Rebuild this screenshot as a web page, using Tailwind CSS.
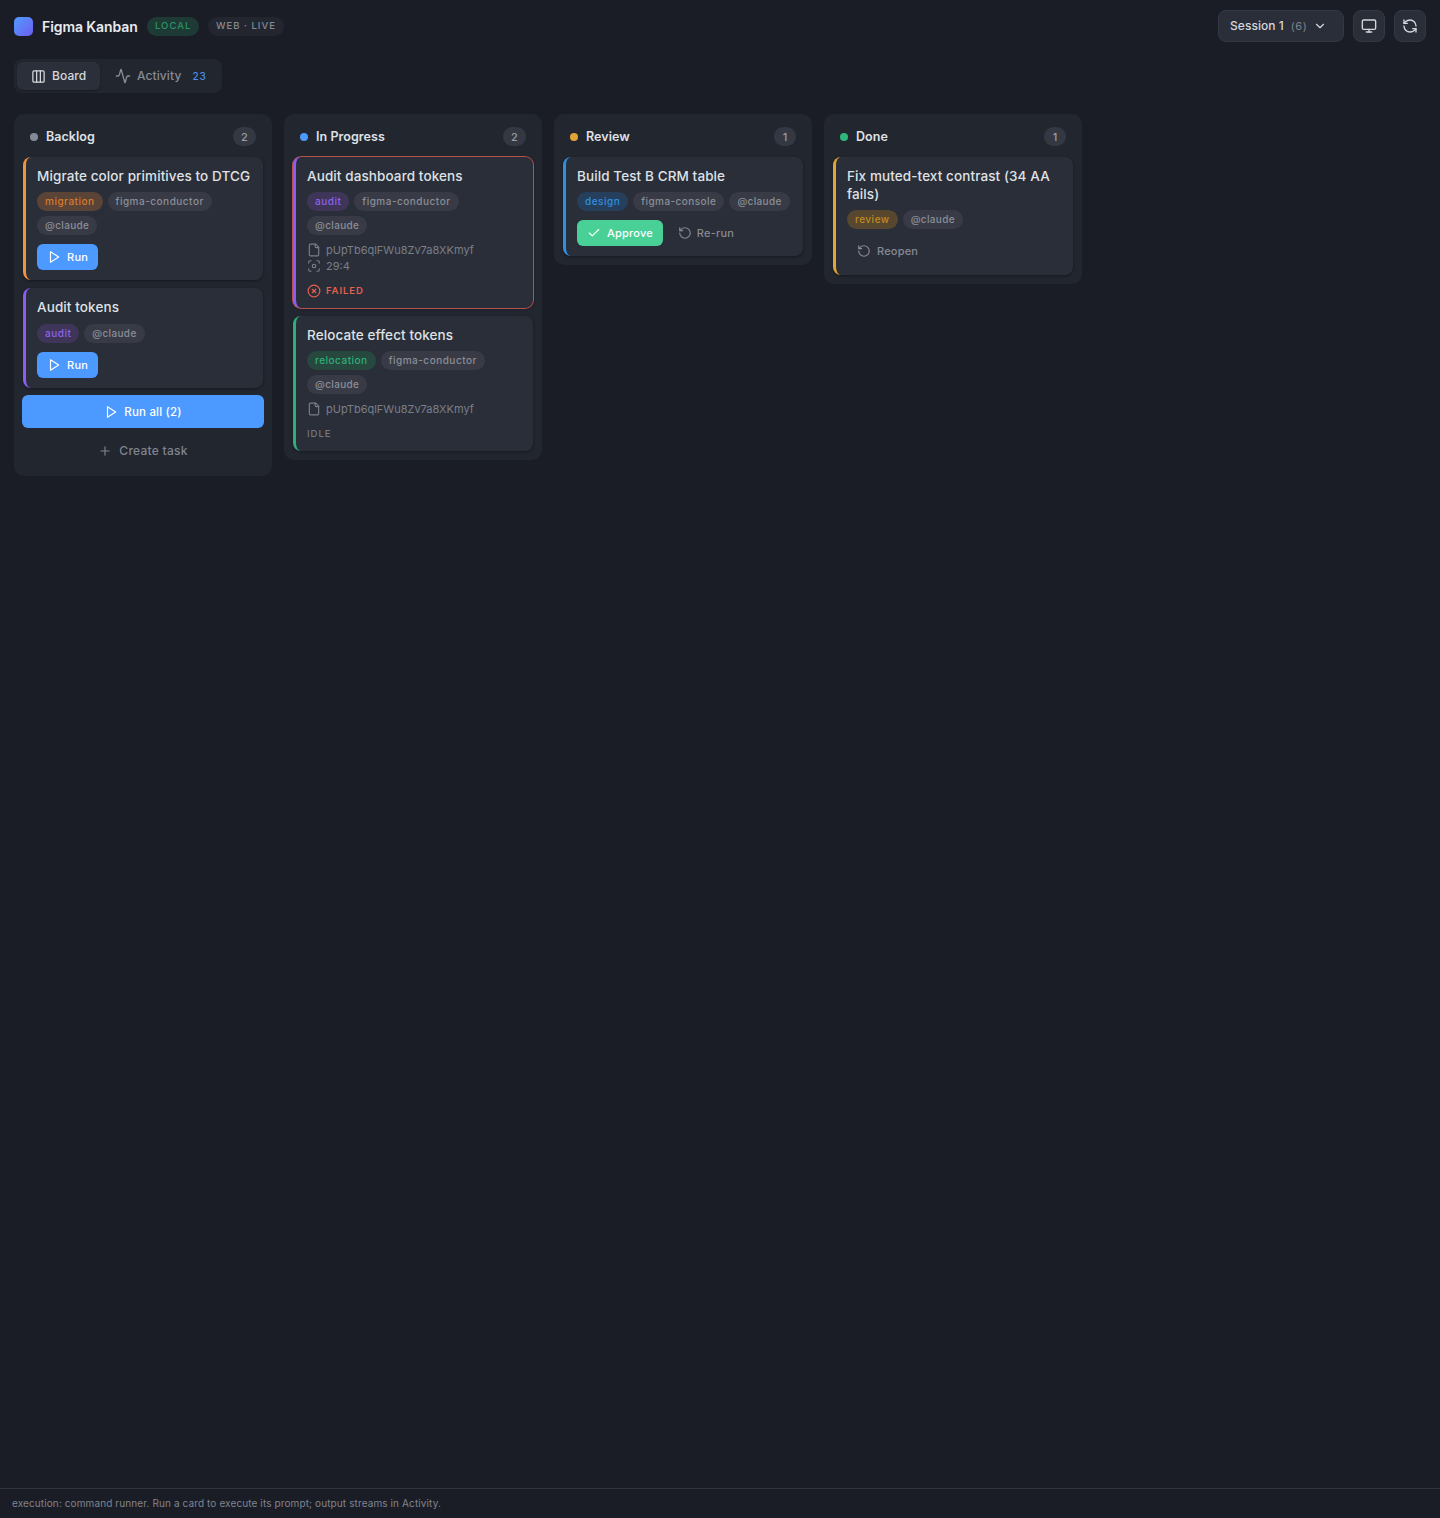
<!DOCTYPE html>
<html>
  <head>
    <meta charset="utf-8">
    <title>Figma Kanban</title>
    <script src="https://cdn.jsdelivr.net/npm/@tailwindcss/browser@4"></script>
  </head>
  <body class="bg-[#1a1d26] font-[Inter,sans-serif] text-[#e4e6ea]">
<div class="flex flex-col h-[1518px]">

  <!-- header -->
  <div class="flex items-center h-[52px] pl-3.5 pr-3.5 shrink-0">
    <div class="flex items-center h-[52px] pt-px">
      <div class="w-[19px] h-[19px] rounded-[5px] bg-linear-to-br from-[#4c9aff] to-[#6b5cf0]"></div>
      <div class="ml-[9px] w-[96px] text-[14px] leading-5 font-semibold whitespace-nowrap tracking-[-0.08px] text-[#e8eaee]">Figma Kanban</div>
      <div class="ml-[9px] h-[19px] w-[52px] pl-2 flex items-center rounded-full bg-[#1d3b34] text-[#2a9466] text-[9.5px] font-medium tracking-[1px]">LOCAL</div>
      <div class="ml-[9px] h-[19px] px-2 flex items-center rounded-full bg-[#23262f] text-[#868a94] text-[9.5px] font-medium tracking-[1px]">WEB · LIVE</div>
    </div>
    <div class="ml-auto h-8 w-[126px] pl-[11px] flex items-center rounded-lg bg-[#2a2e38] border border-[#343843] text-[12px] font-medium tracking-[0.05px] text-[#d5d7dc]">
      Session 1 <span class="ml-[7px] text-[11px] font-normal tracking-[0.5px] text-[#7d818b]">(6)</span>
      <svg class="ml-1.5 w-3.5 h-3.5" viewBox="0 0 24 24" fill="none" stroke="currentColor" stroke-width="2" stroke-linecap="round" stroke-linejoin="round"><path d="m6 9 6 6 6-6"/></svg>
    </div>
    <div class="ml-[9px] w-8 h-8 flex items-center justify-center rounded-lg bg-[#2a2e38] border border-[#343843] text-[#d5d7dc]">
      <svg class="w-4 h-4" viewBox="0 0 24 24" fill="none" stroke="currentColor" stroke-width="2" stroke-linecap="round" stroke-linejoin="round"><rect width="20" height="14" x="2" y="3" rx="2"/><path d="M8 21h8"/><path d="M12 17v4"/></svg>
    </div>
    <div class="ml-[9px] w-8 h-8 flex items-center justify-center rounded-lg bg-[#2a2e38] border border-[#343843] text-[#d5d7dc]">
      <svg class="w-4 h-4" viewBox="0 0 24 24" fill="none" stroke="currentColor" stroke-width="2" stroke-linecap="round" stroke-linejoin="round"><path d="M21 12a9 9 0 0 0-9-9 9.75 9.75 0 0 0-6.74 2.74L3 8"/><path d="M3 3v5h5"/><path d="M3 12a9 9 0 0 0 9 9 9.75 9.75 0 0 0 6.74-2.74L21 16"/><path d="M16 16h5v5"/></svg>
    </div>
  </div>

  <!-- tabs -->
  <div class="ml-3.5 mt-[7px] flex w-[208px] h-[34px] p-[3px] rounded-lg bg-[#22262f] shrink-0">
    <div class="w-[83px] flex items-center pl-3.5 gap-1.5 rounded-md bg-[#2b2f39] shadow-[0_1px_2px_rgba(0,0,0,0.3)] text-[12px] font-medium tracking-[0.1px] text-[#d5d7dc]">
      <svg class="w-[15px] h-[15px]" viewBox="0 0 24 24" fill="none" stroke="currentColor" stroke-width="2" stroke-linecap="round" stroke-linejoin="round"><rect width="18" height="18" x="3" y="3" rx="2"/><path d="M9 3v18"/><path d="M15 3v18"/></svg>
      Board
    </div>
    <div class="flex items-center pl-[15px] text-[12px] font-medium tracking-[0.1px] text-[#868a94]">
      <svg class="w-4 h-4 mr-1.5" viewBox="0 0 24 24" fill="none" stroke="currentColor" stroke-width="2" stroke-linecap="round" stroke-linejoin="round"><path d="M22 12h-2.48a2 2 0 0 0-1.93 1.46l-2.35 8.36a.25.25 0 0 1-.48 0L9.24 2.18a.25.25 0 0 0-.48 0l-2.35 8.36A2 2 0 0 1 4.49 12H2"/></svg>
      Activity
      <span class="ml-[11px] text-[10px] tracking-[1px] text-[#4a8fe8]">23</span>
    </div>
  </div>

  <!-- board -->
  <div class="flex items-start gap-3 pl-3.5 mt-[21px] grow">

    <!-- backlog -->
    <div class="w-[258px] rounded-[10px] bg-[#22262f] px-2 pb-[9px]">
      <div class="flex items-center h-[42.6px] pt-[3.4px] pl-2 pr-2">
        <div class="w-2 h-2 rounded-full bg-[#868a98]"></div>
        <div class="ml-2 text-[12.5px] font-semibold tracking-[0.05px] text-[#dfe1e5]">Backlog</div>
        <div class="ml-auto w-[23px] h-[19px] flex items-center justify-center rounded-full bg-[#343842] text-[11px] font-medium text-[#9a9da6]">2</div>
      </div>
      <div class="flex flex-col gap-2 mx-px">
        <div class="rounded-lg border-l-[3px] border-[#f0923e] bg-[#2a2e38] pl-[11px] pr-[11px] pt-2.5 pb-2.5 shadow-[0_1px_3px_rgba(0,0,0,0.35)]">
          <div class="text-[13.5px] leading-[18.2px] font-medium tracking-[0.1px] text-[#dfe1e5]">Migrate color primitives to DTCG</div>
          <div class="flex flex-wrap gap-[5px] mt-[7.4px]">
            <span class="h-[19px] px-2 flex items-center rounded-full bg-[#5a4337] text-[#d97a2b] text-[10px] font-medium tracking-[0.5px]">migration</span>
            <span class="h-[19px] px-2 flex items-center rounded-full bg-[#383b45] text-[#8a8e98] text-[10px] font-medium tracking-[0.5px]">figma-conductor</span>
            <span class="h-[19px] px-2 flex items-center rounded-full bg-[#383b45] text-[#8a8e98] text-[10px] font-medium tracking-[0.35px]">@claude</span>
          </div>
          <div class="mt-[9px] w-[61px] h-[26px] pl-2.5 flex items-center gap-1.5 rounded-md bg-[#4c9aff] text-white text-[11px] font-medium tracking-[0.3px]">
            <svg class="w-3.5 h-3.5" viewBox="0 0 24 24" fill="none" stroke="currentColor" stroke-width="2" stroke-linecap="round" stroke-linejoin="round"><polygon points="6 3 20 12 6 21 6 3"/></svg>
            Run
          </div>
        </div>
        <div class="rounded-lg border-l-[3px] border-[#8b5cf6] bg-[#2a2e38] pl-[11px] pr-[11px] pt-2.5 pb-2.5 shadow-[0_1px_3px_rgba(0,0,0,0.35)]">
          <div class="text-[13.5px] leading-[18.2px] font-medium tracking-[0.1px] text-[#dfe1e5]">Audit tokens</div>
          <div class="flex flex-wrap gap-[5px] mt-[7.4px]">
            <span class="h-[19px] px-2 flex items-center rounded-full bg-[#3f3558] text-[#8f62e8] text-[10px] font-medium tracking-[0.5px]">audit</span>
            <span class="h-[19px] px-2 flex items-center rounded-full bg-[#383b45] text-[#8a8e98] text-[10px] font-medium tracking-[0.35px]">@claude</span>
          </div>
          <div class="mt-[9px] w-[61px] h-[26px] pl-2.5 flex items-center gap-1.5 rounded-md bg-[#4c9aff] text-white text-[11px] font-medium tracking-[0.3px]">
            <svg class="w-3.5 h-3.5" viewBox="0 0 24 24" fill="none" stroke="currentColor" stroke-width="2" stroke-linecap="round" stroke-linejoin="round"><polygon points="6 3 20 12 6 21 6 3"/></svg>
            Run
          </div>
        </div>
      </div>
      <div class="mt-[7px] h-[33px] pt-0.5 flex items-center justify-center gap-1.5 rounded-md bg-[#4c9aff] text-white text-[11.5px] font-medium tracking-[0.2px]">
        <svg class="w-3.5 h-3.5" viewBox="0 0 24 24" fill="none" stroke="currentColor" stroke-width="2" stroke-linecap="round" stroke-linejoin="round"><polygon points="6 3 20 12 6 21 6 3"/></svg>
        Run all (2)
      </div>
      <div class="mt-1.5 h-[33px] pt-0.5 flex items-center justify-center gap-[7px] text-[12px] font-medium tracking-[0.25px] text-[#80848e]">
        <svg class="w-3.5 h-3.5" viewBox="0 0 24 24" fill="none" stroke="currentColor" stroke-width="2" stroke-linecap="round" stroke-linejoin="round"><path d="M5 12h14"/><path d="M12 5v14"/></svg>
        Create task
      </div>
    </div>

    <!-- in progress -->
    <div class="w-[258px] rounded-[10px] bg-[#22262f] px-2 pb-[9px]">
      <div class="flex items-center h-[42.6px] pt-[3.4px] pl-2 pr-2">
        <div class="w-2 h-2 rounded-full bg-[#4c9aff]"></div>
        <div class="ml-2 text-[12.5px] font-semibold tracking-[0.05px] text-[#dfe1e5]">In Progress</div>
        <div class="ml-auto w-[23px] h-[19px] flex items-center justify-center rounded-full bg-[#343842] text-[11px] font-medium text-[#9a9da6]">2</div>
      </div>
      <div class="flex flex-col gap-2 mx-px">
        <div class="rounded-lg border-l-[3px] border-[#8b5cf6] bg-[#2a2e38] pl-[11px] pr-[11px] pt-2.5 pb-2.5 ring-1 ring-[#b5504c] shadow-[0_1px_3px_rgba(0,0,0,0.35)]">
          <div class="text-[13.5px] leading-[18.2px] font-medium tracking-[0.1px] text-[#dfe1e5]">Audit dashboard tokens</div>
          <div class="flex flex-wrap gap-[5px] mt-[7.4px]">
            <span class="h-[19px] px-2 flex items-center rounded-full bg-[#3f3558] text-[#8f62e8] text-[10px] font-medium tracking-[0.5px]">audit</span>
            <span class="h-[19px] px-2 flex items-center rounded-full bg-[#383b45] text-[#8a8e98] text-[10px] font-medium tracking-[0.5px]">figma-conductor</span>
            <span class="h-[19px] px-2 flex items-center rounded-full bg-[#383b45] text-[#8a8e98] text-[10px] font-medium tracking-[0.35px]">@claude</span>
          </div>
          <div class="mt-[7px] flex items-center gap-[5px] h-4 text-[11px] text-[#7a7e88]">
            <svg class="w-3.5 h-3.5" viewBox="0 0 24 24" fill="none" stroke="currentColor" stroke-width="2" stroke-linecap="round" stroke-linejoin="round"><path d="M15 2H6a2 2 0 0 0-2 2v16a2 2 0 0 0 2 2h12a2 2 0 0 0 2-2V7Z"/><path d="M14 2v4a2 2 0 0 0 2 2h4"/></svg>
            pUpTb6qlFWu8Zv7a8XKmyf
          </div>
          <div class="flex items-center gap-[5px] h-4 text-[11px] text-[#7a7e88]">
            <svg class="w-3.5 h-3.5" viewBox="0 0 24 24" fill="none" stroke="currentColor" stroke-width="2" stroke-linecap="round" stroke-linejoin="round"><circle cx="12" cy="12" r="3"/><path d="M3 7V5a2 2 0 0 1 2-2h2"/><path d="M17 3h2a2 2 0 0 1 2 2v2"/><path d="M21 17v2a2 2 0 0 1-2 2h-2"/><path d="M7 21H5a2 2 0 0 1-2-2v-2"/></svg>
            29:4
          </div>
          <div class="mt-[9.6px] flex items-center gap-[5px] h-3.5 text-[9.5px] font-semibold tracking-[0.9px] text-[#e5604f]">
            <svg class="w-3.5 h-3.5" viewBox="0 0 24 24" fill="none" stroke="currentColor" stroke-width="2" stroke-linecap="round" stroke-linejoin="round"><circle cx="12" cy="12" r="10"/><path d="m15 9-6 6"/><path d="m9 9 6 6"/></svg>
            FAILED
          </div>
        </div>
        <div class="rounded-lg border-l-[3px] border-[#2fae78] bg-[#2a2e38] pl-[11px] pr-[11px] pt-2.5 pb-2.5 shadow-[0_1px_3px_rgba(0,0,0,0.35)]">
          <div class="text-[13.5px] leading-[18.2px] font-medium tracking-[0.1px] text-[#dfe1e5]">Relocate effect tokens</div>
          <div class="flex flex-wrap gap-[5px] mt-[7.4px]">
            <span class="h-[19px] px-2 flex items-center rounded-full bg-[#27483f] text-[#2fae78] text-[10px] font-medium tracking-[0.5px]">relocation</span>
            <span class="h-[19px] px-2 flex items-center rounded-full bg-[#383b45] text-[#8a8e98] text-[10px] font-medium tracking-[0.5px]">figma-conductor</span>
            <span class="h-[19px] px-2 flex items-center rounded-full bg-[#383b45] text-[#8a8e98] text-[10px] font-medium tracking-[0.35px]">@claude</span>
          </div>
          <div class="mt-[7px] flex items-center gap-[5px] h-4 text-[11px] text-[#7a7e88]">
            <svg class="w-3.5 h-3.5" viewBox="0 0 24 24" fill="none" stroke="currentColor" stroke-width="2" stroke-linecap="round" stroke-linejoin="round"><path d="M15 2H6a2 2 0 0 0-2 2v16a2 2 0 0 0 2 2h12a2 2 0 0 0 2-2V7Z"/><path d="M14 2v4a2 2 0 0 0 2 2h4"/></svg>
            pUpTb6qlFWu8Zv7a8XKmyf
          </div>
          <div class="mt-[9.6px] flex items-center h-3.5 text-[9.5px] font-medium tracking-[1px] text-[#747882]">IDLE</div>
        </div>
      </div>
    </div>

    <!-- review -->
    <div class="w-[258px] rounded-[10px] bg-[#22262f] px-2 pb-[9px]">
      <div class="flex items-center h-[42.6px] pt-[3.4px] pl-2 pr-2">
        <div class="w-2 h-2 rounded-full bg-[#e2a436]"></div>
        <div class="ml-2 text-[12.5px] font-semibold tracking-[0.05px] text-[#dfe1e5]">Review</div>
        <div class="ml-auto w-[22px] h-[19px] flex items-center justify-center rounded-full bg-[#343842] text-[11px] font-medium text-[#9a9da6]">1</div>
      </div>
      <div class="flex flex-col gap-2 mx-px">
        <div class="rounded-lg border-l-[3px] border-[#2f8fe0] bg-[#2a2e38] pl-[11px] pr-[11px] pt-2.5 pb-2.5 shadow-[0_1px_3px_rgba(0,0,0,0.35)]">
          <div class="text-[13.5px] leading-[18.2px] font-medium tracking-[0.1px] text-[#dfe1e5]">Build Test B CRM table</div>
          <div class="flex flex-wrap gap-[5px] mt-[7.4px]">
            <span class="h-[19px] px-2 flex items-center rounded-full bg-[#263f5c] text-[#2f8fe0] text-[10px] font-medium tracking-[0.5px]">design</span>
            <span class="h-[19px] px-2 flex items-center rounded-full bg-[#383b45] text-[#8a8e98] text-[10px] font-medium tracking-[0.45px]">figma-console</span>
            <span class="h-[19px] px-2 flex items-center rounded-full bg-[#383b45] text-[#8a8e98] text-[10px] font-medium tracking-[0.35px]">@claude</span>
          </div>
          <div class="mt-[9px] flex items-center gap-[5px]">
            <div class="h-[26px] px-2.5 flex items-center gap-1.5 rounded-md bg-[#48d097] text-white text-[11px] font-medium tracking-[0.2px]">
              <svg class="w-3.5 h-3.5" viewBox="0 0 24 24" fill="none" stroke="currentColor" stroke-width="2" stroke-linecap="round" stroke-linejoin="round"><path d="M20 6 9 17l-5-5"/></svg>
              Approve
            </div>
            <div class="h-[26px] px-2.5 flex items-center gap-[5px] text-[#868a94] text-[11px] font-medium tracking-[0.2px]">
              <svg class="w-3.5 h-3.5" viewBox="0 0 24 24" fill="none" stroke="currentColor" stroke-width="2" stroke-linecap="round" stroke-linejoin="round"><path d="M3 12a9 9 0 1 0 9-9 9.75 9.75 0 0 0-6.74 2.74L3 8"/><path d="M3 3v5h5"/></svg>
              Re-run
            </div>
          </div>
        </div>
      </div>
    </div>

    <!-- done -->
    <div class="w-[258px] rounded-[10px] bg-[#22262f] px-2 pb-[9px]">
      <div class="flex items-center h-[42.6px] pt-[3.4px] pl-2 pr-2">
        <div class="w-2 h-2 rounded-full bg-[#2fb57c]"></div>
        <div class="ml-2 text-[12.5px] font-semibold tracking-[0.05px] text-[#dfe1e5]">Done</div>
        <div class="ml-auto w-[22px] h-[19px] flex items-center justify-center rounded-full bg-[#343842] text-[11px] font-medium text-[#9a9da6]">1</div>
      </div>
      <div class="flex flex-col gap-2 mx-px">
        <div class="rounded-lg border-l-[3px] border-[#e2a436] bg-[#2a2e38] pl-[11px] pr-[11px] pt-2.5 pb-[10.6px] shadow-[0_1px_3px_rgba(0,0,0,0.35)]">
          <div class="text-[13.5px] leading-[18.2px] font-medium tracking-[0.1px] text-[#dfe1e5]">Fix muted-text contrast (34 AA fails)</div>
          <div class="flex flex-wrap gap-[5px] mt-[7.4px]">
            <span class="h-[19px] px-2 flex items-center rounded-full bg-[#57472f] text-[#c08a22] text-[10px] font-medium tracking-[0.5px]">review</span>
            <span class="h-[19px] px-2 flex items-center rounded-full bg-[#383b45] text-[#8a8e98] text-[10px] font-medium tracking-[0.35px]">@claude</span>
          </div>
          <div class="mt-[9px] h-[26px] px-2.5 flex items-center gap-1.5 text-[#868a94] text-[11px] font-medium tracking-[0.2px]">
            <svg class="w-3.5 h-3.5" viewBox="0 0 24 24" fill="none" stroke="currentColor" stroke-width="2" stroke-linecap="round" stroke-linejoin="round"><path d="M3 12a9 9 0 1 0 9-9 9.75 9.75 0 0 0-6.74 2.74L3 8"/><path d="M3 3v5h5"/></svg>
            Reopen
          </div>
        </div>
      </div>
    </div>
  </div>

  <!-- footer -->
  <div class="h-[30px] shrink-0 flex items-center px-3 border-t border-[#30343d] text-[10px] tracking-[0.11px] text-[#80848e]">execution: command runner. Run a card to execute its prompt; output streams in Activity.</div>
</div>
  </body>
</html>
